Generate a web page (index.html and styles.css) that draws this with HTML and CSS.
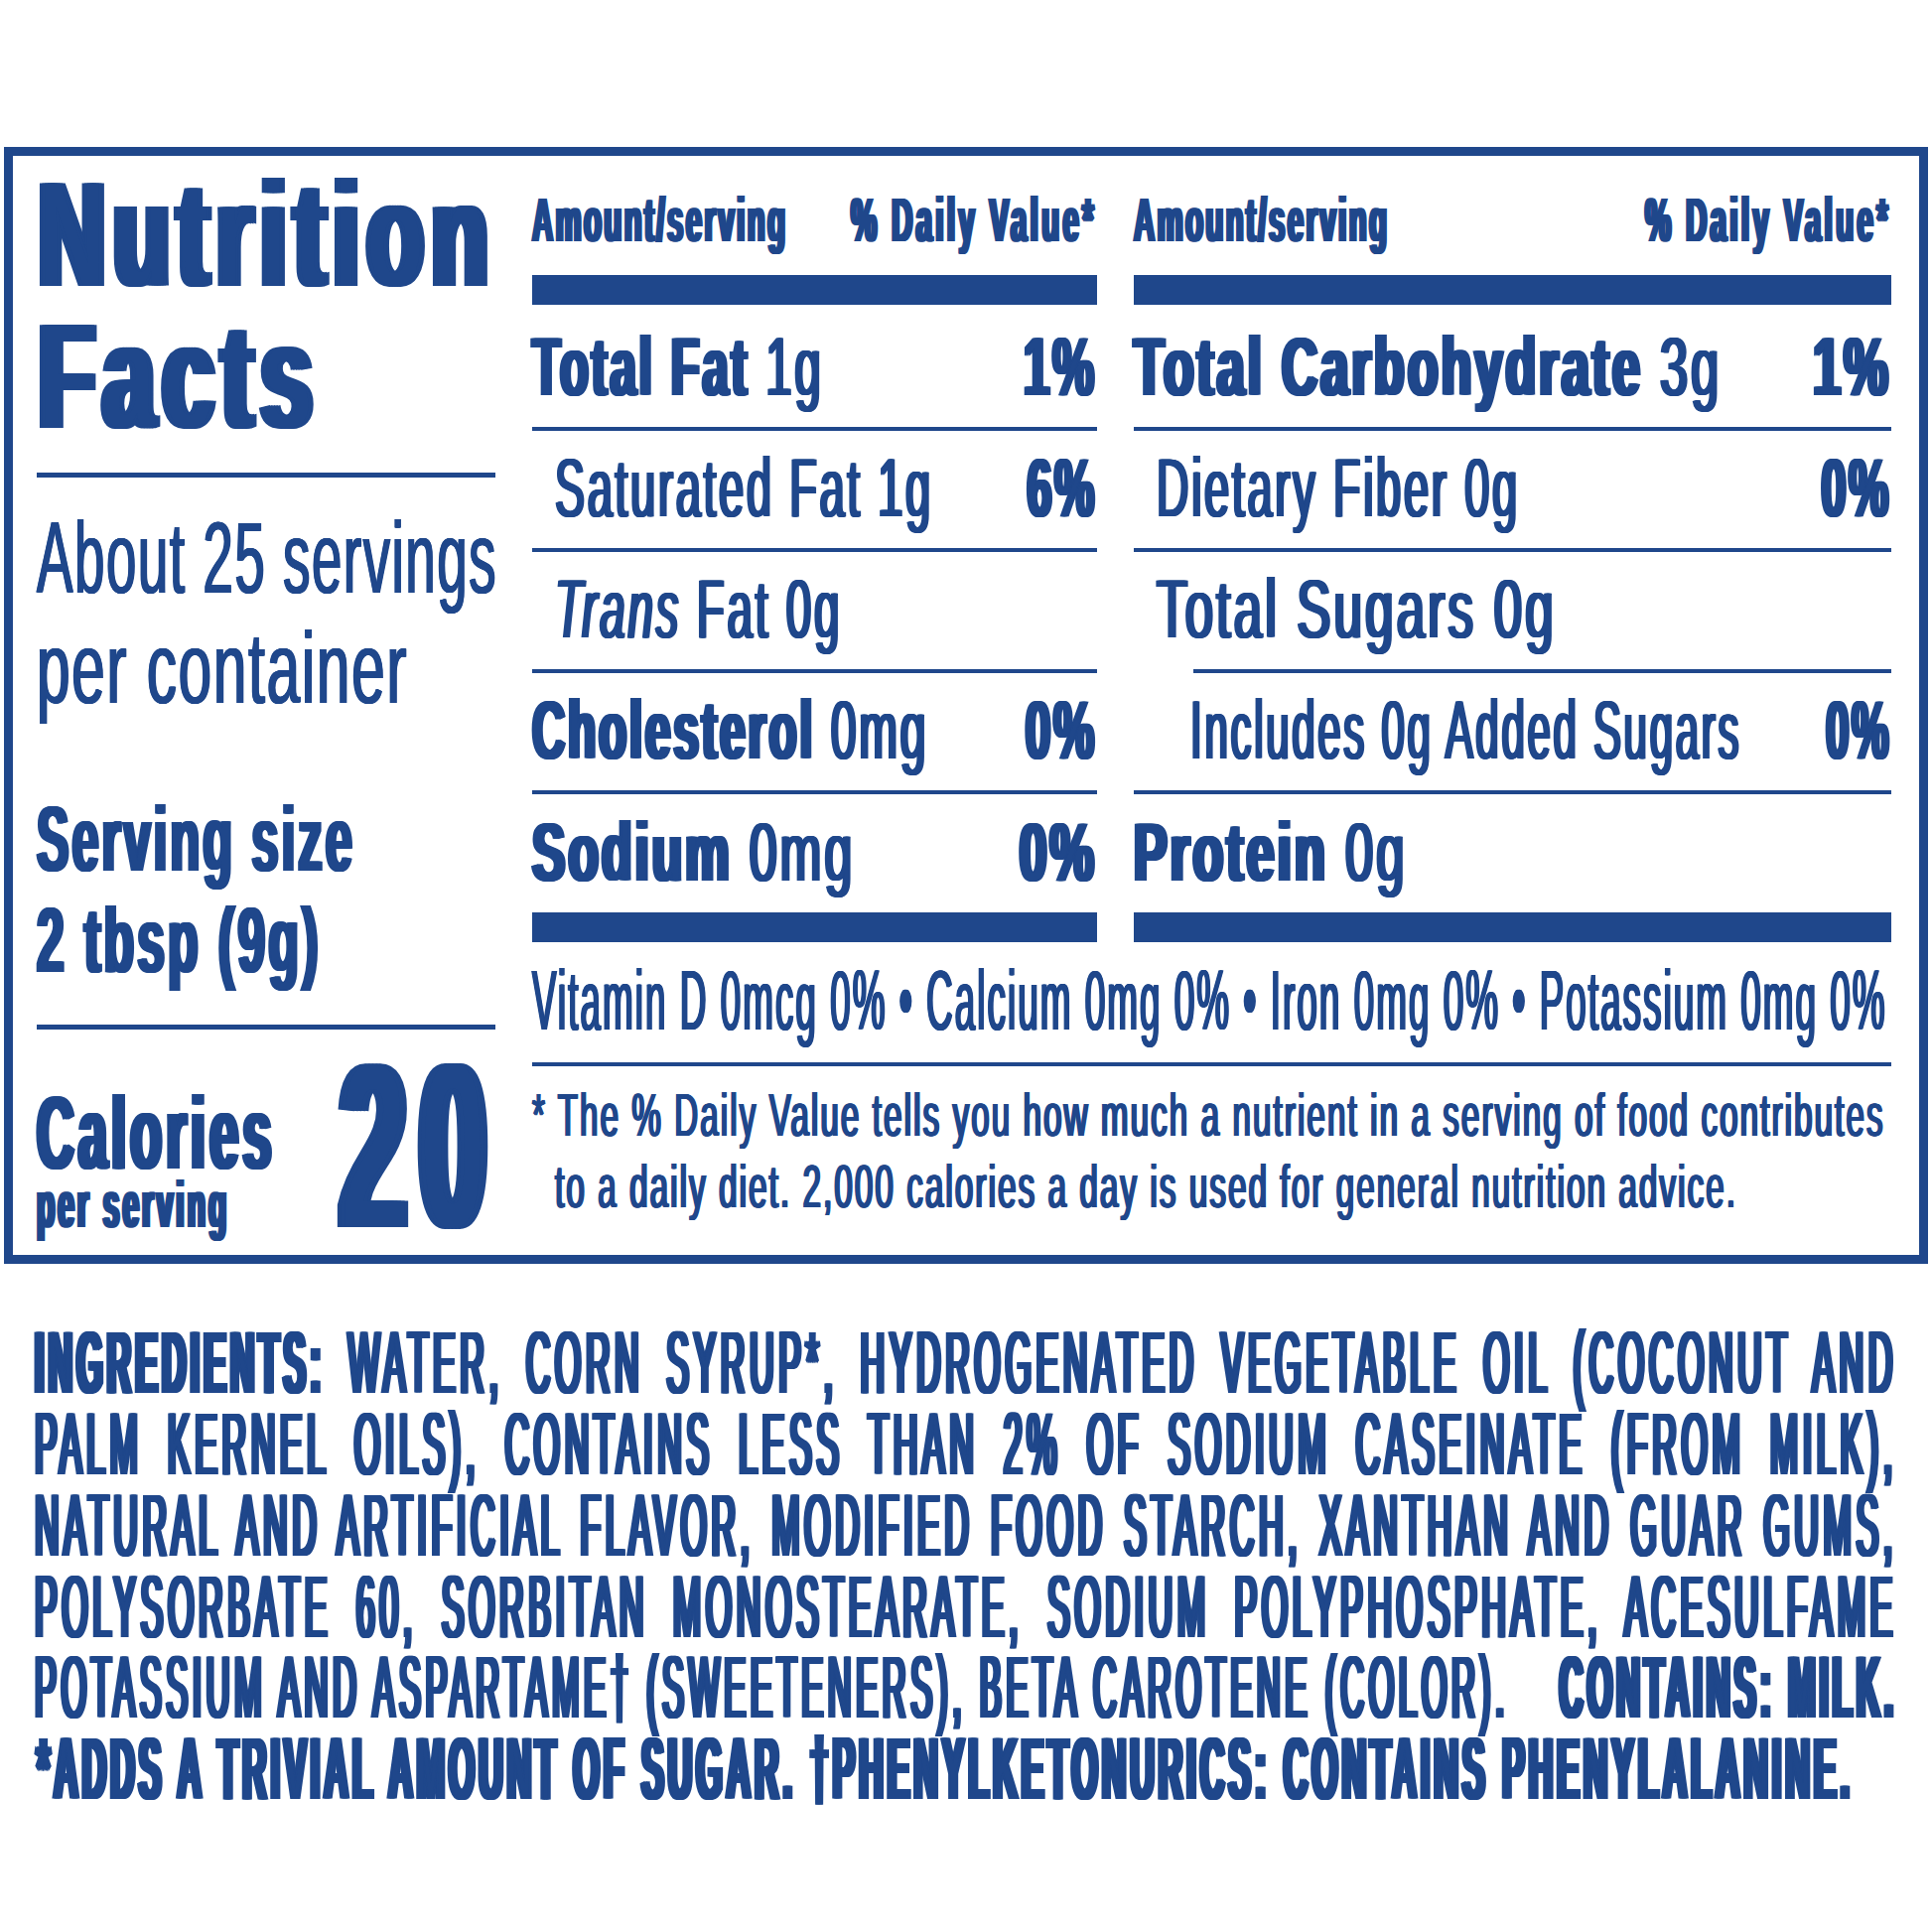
FILE: index.html
```html
<!DOCTYPE html>
<html lang="en">
<head>
<meta charset="utf-8">
<title>Nutrition Facts</title>
<link rel="stylesheet" href="styles.css">
</head>
<body>
<section class="label">
  <div class="left">
    <div class="fit title"><div class="in">Nutrition<br>Facts</div></div>
    <div class="rule-l rl1"></div>
    <div class="servings">
      <div class="fit s-about"><div class="in">About 25 servings</div></div>
      <div class="fit s-cont"><div class="in">per container</div></div>
    </div>
    <div class="size">
      <div class="fit s-size"><div class="in">Serving size</div></div>
      <div class="fit s-tbsp"><div class="in">2 tbsp (9g)</div></div>
    </div>
    <div class="rule-l rl2"></div>
    <div class="calories">
      <div class="cal-left">
        <div class="fit s-cal"><div class="in">Calories</div></div>
        <div class="fit s-per"><div class="in">per serving</div></div>
      </div>
      <div class="fit cal-num"><div class="in">20</div></div>
    </div>
  </div>

  <div class="right">
    <div class="table">
      <div class="col">
        <div class="fit hdr"><div class="in"><span class="h-amt">Amount/serving</span><span class="h-dv">% Daily Value*</span></div></div>
        <div class="bar"></div>
        <div class="fit row h1 a1"><div class="in"><span><b class="b">Total Fat</b> 1g</span><b class="b">1%</b></div></div>
        <div class="rule"></div>
        <div class="fit row h2 ind a2"><div class="in"><span>Saturated Fat 1g</span><b class="b">6%</b></div></div>
        <div class="rule"></div>
        <div class="fit row h2 ind a3"><div class="in"><span><i>Trans</i> Fat 0g</span></div></div>
        <div class="rule"></div>
        <div class="fit row h2 a4"><div class="in"><span><b class="b">Cholesterol</b> 0mg</span><b class="b">0%</b></div></div>
        <div class="rule"></div>
        <div class="fit row h5 a5"><div class="in"><span><b class="b">Sodium</b> 0mg</span><b class="b">0%</b></div></div>
        <div class="bar"></div>
      </div>
      <div class="col">
        <div class="fit hdr"><div class="in"><span class="h-amt">Amount/serving</span><span class="h-dv">% Daily Value*</span></div></div>
        <div class="bar"></div>
        <div class="fit row h1 b1"><div class="in"><span><b class="b">Total Carbohydrate</b> 3g</span><b class="b">1%</b></div></div>
        <div class="rule"></div>
        <div class="fit row h2 ind b2"><div class="in"><span>Dietary Fiber 0g</span><b class="b">0%</b></div></div>
        <div class="rule"></div>
        <div class="fit row h2 ind b3"><div class="in"><span>Total Sugars 0g</span></div></div>
        <div class="rule rule-ind"></div>
        <div class="fit row h2 ind2 b4"><div class="in"><span>Includes 0g Added Sugars</span><b class="b">0%</b></div></div>
        <div class="rule"></div>
        <div class="fit row h5 b5"><div class="in"><span><b class="b">Protein</b> 0g</span></div></div>
        <div class="bar"></div>
      </div>
    </div>
    <div class="fit vit"><div class="in">Vitamin D 0mcg 0% • Calcium 0mg 0% • Iron 0mg 0% • Potassium 0mg 0%</div></div>
    <div class="rule"></div>
    <div class="fit foot"><div class="in">* The % Daily Value tells you how much a nutrient in a serving of food contributes<br>to a daily diet. 2,000 calories a day is used for general nutrition advice.</div></div>
  </div>
</section>

<section class="ingr">
  <div class="fit just i1"><div class="in"><b class="b">INGREDIENTS:</b> WATER, CORN SYRUP*, HYDROGENATED VEGETABLE OIL (COCONUT AND</div></div>
  <div class="fit just i2"><div class="in">PALM KERNEL OILS), CONTAINS LESS THAN 2% OF SODIUM CASEINATE (FROM MILK),</div></div>
  <div class="fit just i3"><div class="in">NATURAL AND ARTIFICIAL FLAVOR, MODIFIED FOOD STARCH, XANTHAN AND GUAR GUMS,</div></div>
  <div class="fit just i4"><div class="in">POLYSORBATE 60, SORBITAN MONOSTEARATE, SODIUM POLYPHOSPHATE, ACESULFAME</div></div>
  <div class="fit i5"><div class="in"><span>POTASSIUM AND ASPARTAME† (SWEETENERS), BETA CAROTENE (COLOR).</span><b class="b">CONTAINS: MILK.</b></div></div>
  <div class="fit i6"><div class="in"><b class="b">*ADDS A TRIVIAL AMOUNT OF SUGAR. †PHENYLKETONURICS: CONTAINS PHENYLALANINE.</b></div></div>
</section>
</body>
</html>
```

FILE: styles.css
```css
* { box-sizing: border-box; margin: 0; padding: 0; }

html, body { background: #fff; overflow: hidden; }

body {
  --d: 0px;
  width: 1946px;
  height: 1946px;
  color: #1f478b;
  font-family: "Liberation Sans", Arial, sans-serif;
  font-weight: 400;
}

/* Condensed type: each line is set wide, then squeezed to its box width.
   Horizontal-only shadows give the heavy vertical stems of a condensed face. */
.fit > .in {
  display: block;
  flex: none;
  width: calc(100% / var(--s));
  transform: scaleX(var(--s));
  transform-origin: 0 0;
  white-space: nowrap;
}
.in, .in * {
  text-shadow:
    calc(var(--d) * .5) 0, calc(var(--d) * -.5) 0,
    var(--d) 0, calc(var(--d) * -1) 0;
}

.b { font-weight: 700; }

.label {
  margin: 148px 0 0 4px;
  width: 1938px;
  height: 1125px;
  border: 9px solid currentColor;
  padding: 0 28px 0 24px;
  display: flex;
  gap: 37px;
}

/* ---------- left column ---------- */
.left {
  width: 462px;
  min-width: 0;
  flex: none;
  display: flex;
  flex-direction: column;
}

.title {
  --s: .62;
  --d: 8.5px;
  margin-top: 9.3px;
  padding-left: 2px;
  font-size: 149.4px;
  line-height: 142.4px;
  font-weight: 700;
  letter-spacing: 13.4px;
}

.rule-l { height: 5px; background: currentColor; flex: none; }
.rl1 { margin-top: 24.7px; }
.rl2 { margin-top: 33px; }

.servings { --d: 1.5px; margin-top: 26.4px; font-size: 102px; line-height: 111px; letter-spacing: 3px; }
.s-about { --s: .535; }
.s-cont { --s: .59; }

.size {
  --d: 3.85px;
  margin-top: 65.8px;
  font-size: 92.2px;
  line-height: 102px;
  font-weight: 700;
  letter-spacing: 6px;
}
.s-size { --s: .526; }
.s-tbsp { --s: .539; }

.calories {
  flex: 1;
  display: flex;
  align-items: flex-end;
  padding-bottom: 15.4px;
}
.cal-left { flex: 1; min-width: 0; margin-bottom: 6px; font-weight: 700; }
.s-cal {
  --s: .502;
  --d: 5.5px;
  font-size: 103.4px;
  line-height: 83px;
  letter-spacing: 9px;
}
.s-per {
  --s: .441;
  --d: 4.5px;
  font-size: 67.4px;
  line-height: 60px;
  letter-spacing: 7px;
}
.cal-num {
  --s: .5;
  --d: 14.5px;
  width: 150px;
  flex: none;
  margin-right: 6px;
  font-size: 236px;
  line-height: 188.8px;
  font-weight: 700;
  letter-spacing: 29px;
}

/* ---------- right area ---------- */
.right {
  flex: 1;
  min-width: 0;
  display: flex;
  flex-direction: column;
}

.table {
  display: grid;
  grid-template-columns: 569px 763px;
  column-gap: 37px;
}

.col { display: flex; flex-direction: column; min-width: 0; }

.hdr {
  --s: .465;
  --d: 3.9px;
  height: 120px;
  display: flex;
  align-items: flex-end;
  padding-bottom: 24.4px;
  font-size: 62.8px;
  line-height: 1;
  font-weight: 700;
}
.h-amt { letter-spacing: 5.4px; }
.h-dv { letter-spacing: 7.4px; }

.bar { height: 30px; background: currentColor; flex: none; }
.rule { height: 4px; background: currentColor; flex: none; }
.rule-ind { margin-left: 60px; }

.row {
  --d: 3px;
  display: flex;
  align-items: flex-end;
  padding-bottom: 18.1px;
  font-size: 83.8px;
  line-height: 1;
  letter-spacing: 5.5px;
}
.row .b { --d: 4.2px; letter-spacing: 5.4px; }
.h1 { height: 123px; }
.h2 { height: 118px; }
.h5 { height: 119px; }
.ind { padding-left: 23px; }
.ind2 { padding-left: 57px; }

.row .in, .hdr .in {
  display: flex;
  justify-content: space-between;
  align-items: baseline;
}

.a1 { --s: .56; }
.a2 { --s: .535; }
.a3 { --s: .541; }
.a4 { --s: .548; }
.a5 { --s: .594; }
.b1 { --s: .597; }
.b2 { --s: .535; }
.b3 { --s: .606; }
.b4 { --s: .5; }
.b5 { --s: .6; }

.vit {
  --s: .43;
  --d: 2.5px;
  height: 121px;
  display: flex;
  align-items: flex-end;
  padding-bottom: 20.2px;
  font-size: 85.2px;
  line-height: 1;
  letter-spacing: 5px;
}

.foot {
  --s: .537;
  --d: 2px;
  margin-top: 12.7px;
  font-size: 61.5px;
  line-height: 72px;
  letter-spacing: 4px;
}
.foot .in { padding-left: 43px; text-indent: -43px; }

/* ---------- ingredients ---------- */
.ingr {
  --d: 6.25px;
  margin: 59.3px 0 0 35px;
  width: 1876px;
  font-size: 89px;
  line-height: 81.8px;
  letter-spacing: 12.5px;
}
.ingr .b { --d: 7.1px; letter-spacing: 11px; }
.just .in {
  white-space: normal;
  text-align: justify;
  text-align-last: justify;
}
.i1, .i2, .i3, .i4 { --s: .38; }
.i5 { --s: .37; }
.i5 .in { display: flex; justify-content: space-between; align-items: baseline; }
.i6 { --s: .3785; padding-left: 2px; }
```
